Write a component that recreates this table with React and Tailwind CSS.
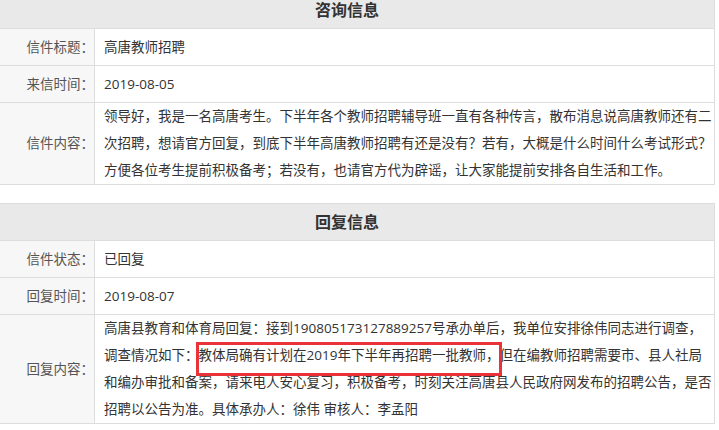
const font = { fontFamily: '"Open Sans", "Noto Sans CJK SC", sans-serif' };

const Row = ({ label, children, tall }) => (
  <div className="flex border-t border-[#dddddd]">
    <div
      className={`w-[95px] shrink-0 bg-[#f7f7f7] border-r border-[#dddddd] text-right text-[#555555] flex items-center justify-end ${
        tall ? "" : "h-[36px]"
      }`}
    >
      {label}
    </div>
    <div className={`flex-1 pl-[9px] pr-px text-[#333333] ${tall ? "" : "h-[36px] flex items-center"}`}>
      {children}
    </div>
  </div>
);

const Section = ({ title, className = "", children }) => (
  <div className={`border border-[#dddddd] ${className}`}>
    <div className="h-[36px] bg-[#e9e9e9] flex items-center justify-center pr-[20px] text-[16px] font-bold text-[#333333]">
      {title}
    </div>
    {children}
  </div>
);

export default function App() {
  return (
    <div
      className="w-[719px] h-[430px] overflow-hidden bg-white text-[13.5px] leading-[27px] [text-autospace:no-autospace]"
      style={font}
    >
      <div className="w-[716px] -ml-px -mt-[9px]">
        <Section title="咨询信息">
          <Row label="信件标题：">高唐教师招聘</Row>
          <Row label="来信时间：">2019-08-05</Row>
          <Row label="信件内容：" tall>
            <p>
              领导好，我是一名高唐考生。下半年各个教师招聘辅导班一直有各种传言，散布消息说高唐教师还有二次招聘，想请官方回复，到底下半年高唐教师招聘有还是没有？若有，大概是什么时间什么考试形式？方便各位考生提前积极备考；若没有，也请官方代为辟谣，让大家能提前安排各自生活和工作。
            </p>
          </Row>
        </Section>

        <Section title="回复信息" className="mt-[18px]">
          <Row label="信件状态：">已回复</Row>
          <Row label="回复时间：">2019-08-07</Row>
          <Row label="回复内容：" tall>
            <p>
              高唐县教育和体育局回复：接到190805173127889257号承办单后，我单位安排徐伟同志进行调查，调查情况如下：
              <span className="outline-3 outline-solid outline-[#ea3338] pt-[1px] pb-[9px]">
                教体局确有计划在2019年下半年再招聘一批教师，
              </span>
              但在编教师招聘需要市、县人社局和编办审批和备案，请来电人安心复习，积极备考，时刻关注高唐县人民政府网发布的招聘公告，是否招聘以公告为准。具体承办人：徐伟 审核人：李孟阳
            </p>
          </Row>
        </Section>
      </div>
    </div>
  );
}
